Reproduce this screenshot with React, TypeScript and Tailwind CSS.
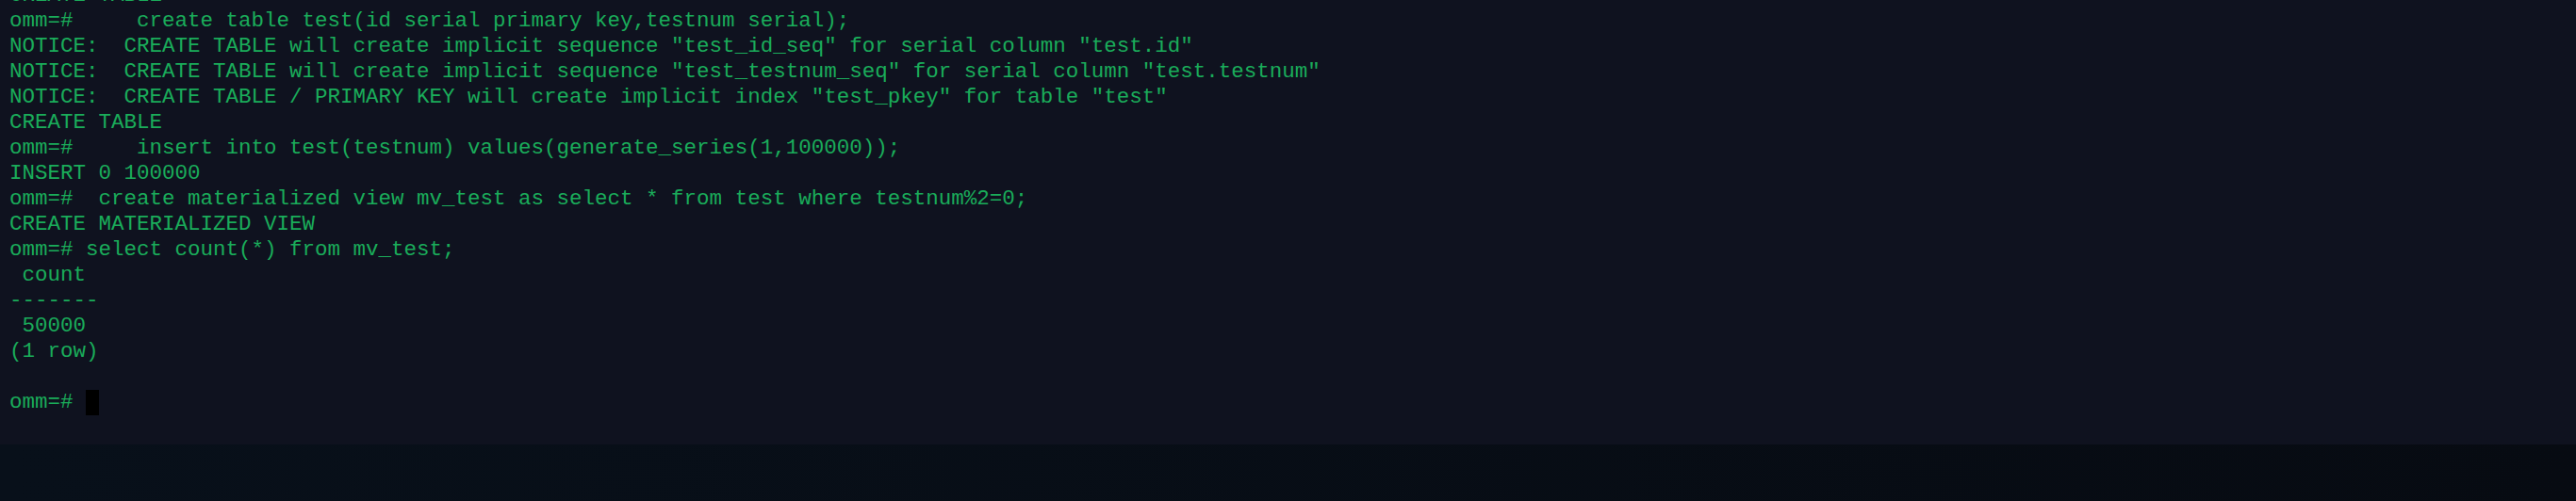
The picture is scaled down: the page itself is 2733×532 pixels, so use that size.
import React from 'react';

const lines: string[] = [
    'CREATE TABLE',
    'omm=#     create table test(id serial primary key,testnum serial);',
    'NOTICE:  CREATE TABLE will create implicit sequence "test_id_seq" for serial column "test.id"',
    'NOTICE:  CREATE TABLE will create implicit sequence "test_testnum_seq" for serial column "test.testnum"',
    'NOTICE:  CREATE TABLE / PRIMARY KEY will create implicit index "test_pkey" for table "test"',
    'CREATE TABLE',
    'omm=#     insert into test(testnum) values(generate_series(1,100000));',
    'INSERT 0 100000',
    'omm=#  create materialized view mv_test as select * from test where testnum%2=0;',
    'CREATE MATERIALIZED VIEW',
    'omm=# select count(*) from mv_test;',
    ' count',
    '-------',
    ' 50000',
    '(1 row)',
    '',
];

const App = () => {
    return (
        <div className="w-[2733px] h-[532px] flex flex-col bg-[#070b13] overflow-hidden">
            {/* Terminal body */}
            <div className="h-[472px] bg-[#0f121f] overflow-hidden pl-[10px] font-['Liberation_Mono',monospace] text-[22.5px] leading-[27px] text-[#1aac5a]">
                <div className="-mt-[18px]">
                    {lines.map((line, i) => (
                        <div key={i} className="h-[27px] whitespace-pre">
                            {line}
                        </div>
                    ))}
                    {/* Prompt with block cursor */}
                    <div className="h-[27px] whitespace-pre flex">
                        <span>omm=# </span>
                        <span className="inline-block w-[14px] h-[27px] bg-black" />
                    </div>
                </div>
            </div>

            {/* Dark strip below */}
            <div className="flex-1 bg-gradient-to-r from-[#08101a] to-[#070b12]" />
        </div>
    );
};

export default App;
